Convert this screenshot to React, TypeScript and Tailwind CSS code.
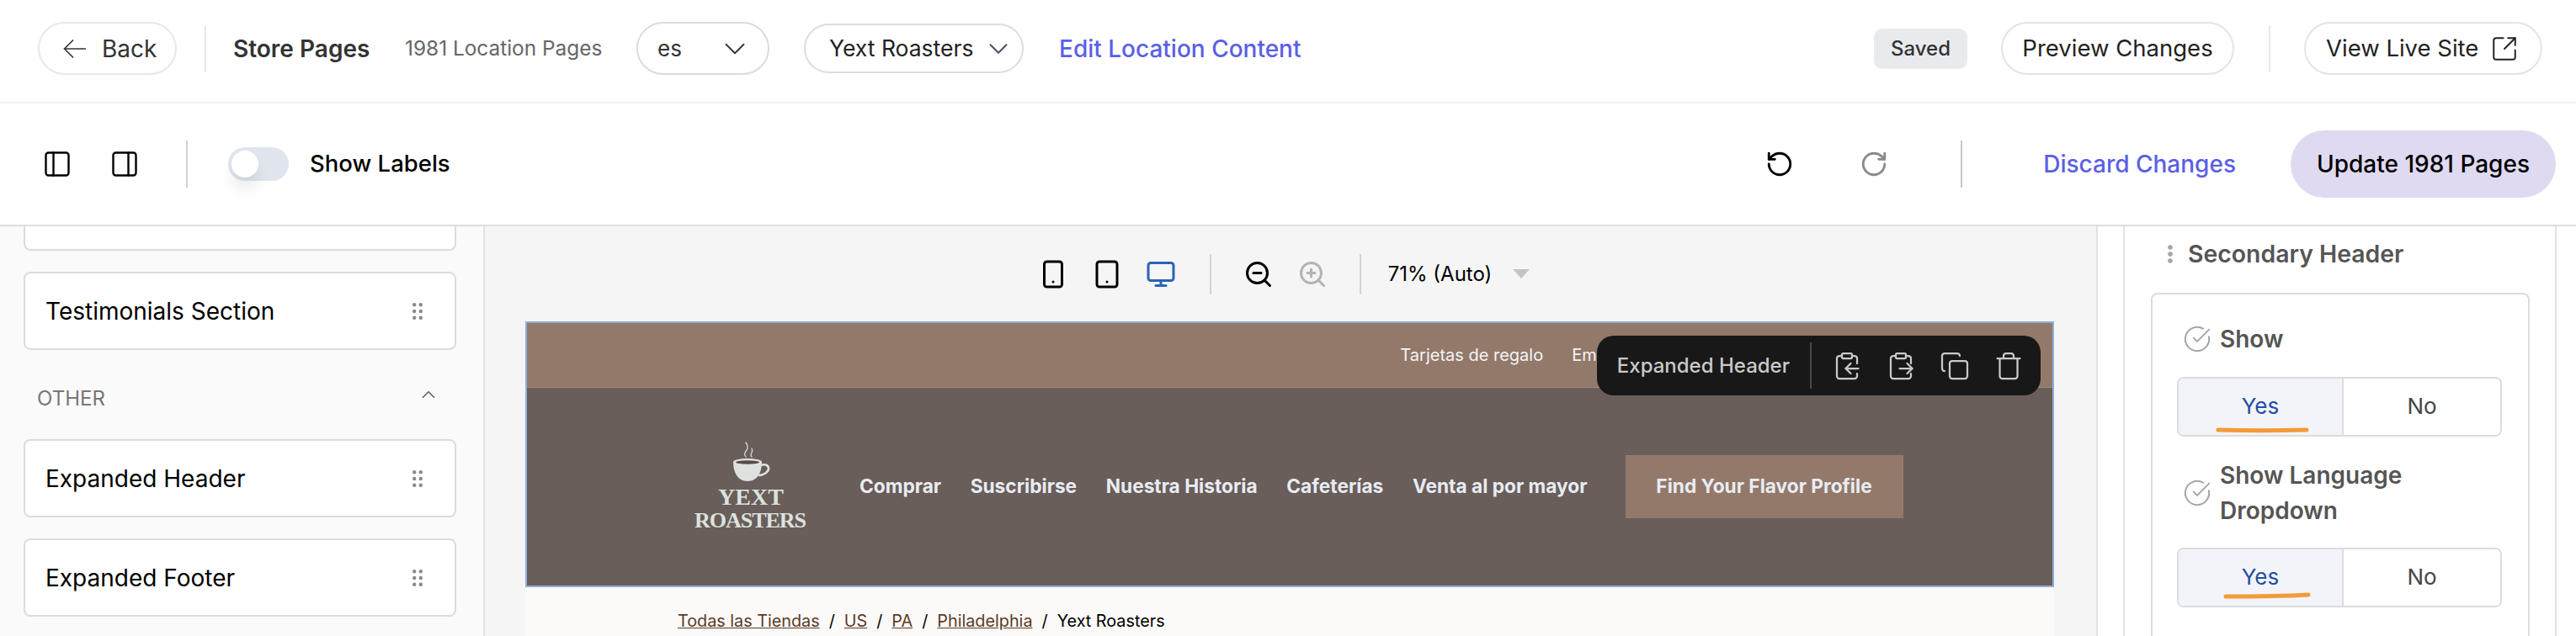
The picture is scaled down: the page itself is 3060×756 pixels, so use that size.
import {
  ChevronDown,
  ChevronUp,
  CircleCheckBig,
  ClipboardCopy,
  Copy,
  Monitor,
  PanelLeft,
  PanelRight,
  RotateCcw,
  RotateCw,
  Smartphone,
  SquareArrowOutUpRight,
  Tablet,
  Trash,
  ZoomIn,
  ZoomOut,
} from "lucide-react";

function Grip({ className }: { className?: string }) {
  return (
    <svg width="12" height="20" viewBox="0 0 12 20" className={className} fill="currentColor">
      <circle cx="2.2" cy="2.2" r="2.2" />
      <circle cx="9.8" cy="2.2" r="2.2" />
      <circle cx="2.2" cy="10" r="2.2" />
      <circle cx="9.8" cy="10" r="2.2" />
      <circle cx="2.2" cy="17.8" r="2.2" />
      <circle cx="9.8" cy="17.8" r="2.2" />
    </svg>
  );
}

function ClipboardOut() {
  return (
    <svg width="36" height="36" viewBox="0 0 24 24" fill="none" stroke="currentColor" strokeWidth="1.5" strokeLinecap="round" strokeLinejoin="round">
      <rect x="8" y="2" width="8" height="4" rx="1" />
      <path d="M8 4H6a2 2 0 0 0-2 2v14a2 2 0 0 0 2 2h12a2 2 0 0 0 2-2v-2" />
      <path d="M16 4h2a2 2 0 0 1 2 2v4" />
      <path d="M11 14h10" />
      <path d="m17 10 4 4-4 4" />
    </svg>
  );
}

function CupLogo() {
  return (
    <div className="flex flex-col items-center w-[130px] text-[#dde2df] font-['Liberation_Serif',serif] font-bold">
      <svg width="44" height="48" viewBox="0 0 44 48" className="ml-[3px]" fill="none">
        <path d="M15 18c-3-3-1-5 1-8s1-6-1-9" stroke="#c9cdca" strokeWidth="1.4" strokeLinecap="round" />
        <path d="M22 18c-2-2-1-3 0-5s1-3 0-5" stroke="#c9cdca" strokeWidth="1.4" strokeLinecap="round" />
        <path d="M0 24c0 12 5 23 17 23s17-11 17-23z" fill="currentColor" />
        <ellipse cx="17" cy="24" rx="17" ry="4" fill="currentColor" />
        <ellipse cx="17" cy="24.5" rx="14" ry="2.2" fill="#5a4a44" />
        <path d="M33 28c5-2 9 0 9 4s-6 8-12 8" stroke="currentColor" strokeWidth="2.6" />
      </svg>
      <div className="text-[28px] leading-[28px] mt-[4px] ml-[2px]">YEXT</div>
      <div className="text-[26px] leading-[28px] tracking-[-1px]">ROASTERS</div>
    </div>
  );
}

function SectionCard({ label }: { label: string }) {
  return (
    <div className="flex items-center justify-between h-[93px] rounded-[8px] border-2 border-[#dcdcdc] bg-white pl-[24px] pr-[38px]">
      <span className="text-[28px] text-black">{label}</span>
      <Grip className="text-[#8a8a8a]" />
    </div>
  );
}

function YesNo({ underline }: { underline: string }) {
  return (
    <div className="flex h-[71px] rounded-[8px] border-2 border-[#dcdcdc] overflow-hidden text-[26px]">
      <div className="relative flex items-center justify-center w-[196px] pb-[2px] bg-[#f3f4fa] text-[#1e4fa3] border-r-2 border-[#dcdcdc]">
        Yes
        <svg width="196" height="8" viewBox="0 0 196 8" className="absolute left-0 top-[56px] overflow-visible" fill="none">
          <path d={underline} stroke="#f49a37" strokeWidth="5" strokeLinecap="round" />
        </svg>
      </div>
      <div className="flex items-center justify-center flex-1 pb-[2px] bg-white text-[#444]">No</div>
    </div>
  );
}

export default function App() {
  return (
    <div className="flex flex-col h-[756px] w-[3060px] overflow-hidden bg-white font-['Inter',sans-serif]">
      {/* top bar */}
      <header className="flex items-center h-[123px] shrink-0 pl-[45px] pr-[40px] pb-[6px] border-b-2 border-[#f1f1f4] text-[#222] whitespace-nowrap">
        <button className="flex items-center gap-[19px] h-[63px] w-[165px] pl-[28px] rounded-full border-2 border-[#e8e8ec] text-[28px] text-[#333]">
          <svg width="27" height="24" viewBox="0 0 27 24" fill="none" stroke="currentColor" strokeWidth="1.7" strokeLinecap="round" strokeLinejoin="round">
            <path d="M1.5 12h25" />
            <path d="M11.5 2 1.5 12l10 10" />
          </svg>
          Back
        </button>
        <div className="w-[2px] h-[56px] bg-[#e8e8ec] ml-[33px]" />
        <div className="ml-[32px] w-[164px] text-[28px] font-semibold text-[#333]">Store Pages</div>
        <div className="ml-[40px] w-[233px] text-[24.4px] text-[#666]">1981 Location Pages</div>
        <div className="flex items-center justify-between ml-[42px] w-[158px] h-[63px] pl-[23px] pr-[18px] rounded-full border-2 border-[#dcdce0] text-[26px] text-[#333]">
          es
          <ChevronDown size={42} strokeWidth={1.05} />
        </div>
        <div className="flex items-center justify-between ml-[41px] w-[261px] h-[59px] pl-[28px] pr-[9px] rounded-full border-2 border-[#dcdce0] text-[26.5px]">
          Yext Roasters
          <ChevronDown size={38} strokeWidth={1.3} className="text-[#4b5563]" />
        </div>
        <a className="ml-[42px] text-[28px] font-medium text-[#5a5fe6]">Edit Location Content</a>
        <div className="flex items-center justify-center ml-auto w-[111px] h-[48px] rounded-[10px] bg-[#e9eaee] text-[24px] font-medium text-[#333]">
          Saved
        </div>
        <button className="ml-[40px] w-[277px] h-[63px] rounded-full border-2 border-[#e4e4e6] text-[27.5px]">Preview Changes</button>
        <div className="w-[2px] h-[56px] bg-[#e8e8ec] ml-[41px]" />
        <button className="flex items-center gap-[14px] ml-[40px] w-[283px] h-[63px] pl-[24px] rounded-full border-2 border-[#e4e4e6] text-[27.5px]">
          View Live Site
          <SquareArrowOutUpRight size={34} strokeWidth={1.4} />
        </button>
      </header>

      {/* editor toolbar */}
      <div className="flex items-center h-[146px] shrink-0 pl-[50px] pr-[24px] border-b-2 border-[#dedede] whitespace-nowrap">
        <PanelLeft size={36} strokeWidth={1.6} className="text-black" />
        <PanelRight size={36} strokeWidth={1.6} className="ml-[44px] text-black" />
        <div className="w-[2px] h-[56px] bg-[#d4d4d4] ml-[55px]" />
        <div className="flex items-center ml-[48px] w-[72px] h-[40px] pl-[4px] rounded-full bg-[#e0e5ee]">
          <div className="w-[32px] h-[32px] rounded-full bg-white shadow-[0_14px_18px_rgba(0,0,0,0.08)]" />
        </div>
        <span className="ml-[25px] text-[27.5px] font-medium text-black">Show Labels</span>
        <RotateCcw size={34} strokeWidth={2} className="ml-auto text-black" />
        <RotateCw size={34} strokeWidth={2} className="ml-[78px] text-[#8a8a8a]" />
        <div className="w-[2px] h-[56px] bg-[#c8c8c8] ml-[86px]" />
        <a className="ml-[96px] text-[28px] font-medium text-[#5a5fe6]">Discard Changes</a>
        <button className="flex items-center justify-center ml-[65px] w-[315px] h-[80px] rounded-full bg-[#dfdaf1] text-[28px] font-medium text-black">
          Update 1981 Pages
        </button>
      </div>

      <div className="flex flex-1 min-h-0">
        {/* sections panel */}
        <aside className="flex flex-col w-[576px] shrink-0 pl-[28px] pr-[32px] bg-[#fafafa] border-r-2 border-[#e2e2e2]">
          <div className="h-[29px] shrink-0 rounded-b-[8px] border-2 border-t-0 border-[#dcdcdc] bg-white" />
          <div className="mt-[25px]">
            <SectionCard label="Testimonials Section" />
          </div>
          <div className="flex items-center justify-between h-[106px] shrink-0 pl-[16px] pr-[20px] pt-[10px]">
            <span className="text-[24px] text-[#777]">OTHER</span>
            <ChevronUp size={26} strokeWidth={1.6} className="text-[#666] mb-[10px]" />
          </div>
          <div className="flex flex-col gap-[25px]">
            <SectionCard label="Expanded Header" />
            <SectionCard label="Expanded Footer" />
          </div>
        </aside>

        {/* preview */}
        <main className="flex flex-col flex-1 min-w-0 pl-[48px] pr-[50px] bg-[#f5f5f5]">
          <div className="flex items-center justify-center h-[113px] shrink-0 pr-[14px]">
            <Smartphone size={36} strokeWidth={2} className="text-black" />
            <Tablet size={36} strokeWidth={2} className="ml-[28px] text-black" />
            <Monitor size={36} strokeWidth={2} className="ml-[28px] text-[#2a62b8]" />
            <div className="w-[2px] h-[48px] bg-[#d4d4d4] ml-[40px]" />
            <ZoomOut size={36} strokeWidth={2} className="ml-[38px] text-black" />
            <ZoomIn size={36} strokeWidth={2} className="ml-[28px] text-[#b4b4b4]" />
            <div className="w-[2px] h-[48px] bg-[#d4d4d4] ml-[38px]" />
            <span className="ml-[32px] text-[24px] text-black">71% (Auto)</span>
            <div className="ml-[25px] w-0 h-0 border-x-[10px] border-x-transparent border-t-[11px] border-t-[#c4c4c4]" />
          </div>

          <div className="flex flex-col flex-1 min-h-0 bg-[#fbfaf8]">
            <div className="relative h-[316px] shrink-0 border-2 border-[#8fb0d8]">
              <div className="flex items-center justify-end gap-[34px] h-[77px] pr-[490px] bg-[#93796a] border-b border-[#a08a7d] text-[20px] text-[#f3f4f6]">
                <span>Tarjetas de regalo</span>
                <span>Empleos</span>
              </div>
              <div className="flex items-center h-[235px] pl-[200px] bg-[#695e5a] text-[22.7px] font-bold text-[#e8ecf2]">
                <CupLogo />
                <nav className="flex items-center gap-[34.6px] ml-[65px]">
                  <span>Comprar</span>
                  <span>Suscribirse</span>
                  <span>Nuestra Historia</span>
                  <span>Cafeterías</span>
                  <span>Venta al por mayor</span>
                </nav>
                <div className="flex items-center justify-center ml-[45px] w-[330px] h-[75px] bg-[#93796a]">Find Your Flavor Profile</div>
              </div>

              <div className="absolute top-[15px] right-[14px] flex items-center h-[71px] pl-[24px] pr-[20px] rounded-[20px] bg-[#181818] text-[#c9c9c9]">
                <span className="text-[24px] font-medium">Expanded Header</span>
                <div className="w-[2px] h-[55px] bg-[#4a4a4a] ml-[24px]" />
                <div className="flex items-center gap-[28px] ml-[24px]">
                  <ClipboardCopy size={36} strokeWidth={1.5} />
                  <ClipboardOut />
                  <Copy size={36} strokeWidth={1.5} />
                  <Trash size={36} strokeWidth={1.5} />
                </div>
              </div>
            </div>
            <div className="flex items-center gap-[11px] h-[82px] shrink-0 pl-[181px] text-[19.8px] text-black">
              <a className="underline text-[#5b3a26]">Todas las Tiendas</a>
              <span>/</span>
              <a className="underline text-[#5b3a26]">US</a>
              <span>/</span>
              <a className="underline text-[#5b3a26]">PA</a>
              <span>/</span>
              <a className="underline text-[#5b3a26]">Philadelphia</a>
              <span>/</span>
              <span>Yext Roasters</span>
            </div>
          </div>
        </main>

        {/* fields panel */}
        <aside className="flex w-[570px] shrink-0 pl-[30px] pr-[23px] bg-white border-l-2 border-[#e2e2e2]">
          <div className="flex flex-col flex-1 pl-[31px] pr-[30px] border-x-2 border-[#e2e2e2]">
            <div className="flex items-center gap-[18px] h-[66px] mb-[13px] shrink-0 pl-[20px] text-[28.4px] font-semibold text-[#555]">
              <svg width="6" height="22" viewBox="0 0 6 22" fill="#a5a5a5">
                <circle cx="3" cy="3" r="2.8" />
                <circle cx="3" cy="11" r="2.8" />
                <circle cx="3" cy="19" r="2.8" />
              </svg>
              Secondary Header
            </div>
            <div className="flex-1 pl-[29px] pr-[31px] pt-[38px] rounded-t-[8px] border-2 border-b-0 border-[#dcdcdc]">
              <div className="flex items-center gap-[10px] h-[30px] pl-[7px] text-[28px] font-semibold text-[#555]">
                <CircleCheckBig size={34} strokeWidth={1.4} className="text-[#a5a5a5]" />
                Show
              </div>
              <div className="mt-[30px]">
                <YesNo underline="M47 5c30 1 70 1 105 0" />
              </div>
              <div className="flex items-center gap-[10px] mt-[25px] pl-[7px] text-[28px] leading-[42px] font-semibold text-[#555]">
                <CircleCheckBig size={34} strokeWidth={1.4} className="shrink-0 text-[#a5a5a5]" />
                Show Language Dropdown
              </div>
              <div className="mt-[23px]">
                <YesNo underline="M56 0c30 0 60 0 98-2" />
              </div>
            </div>
          </div>
        </aside>
      </div>
    </div>
  );
}
